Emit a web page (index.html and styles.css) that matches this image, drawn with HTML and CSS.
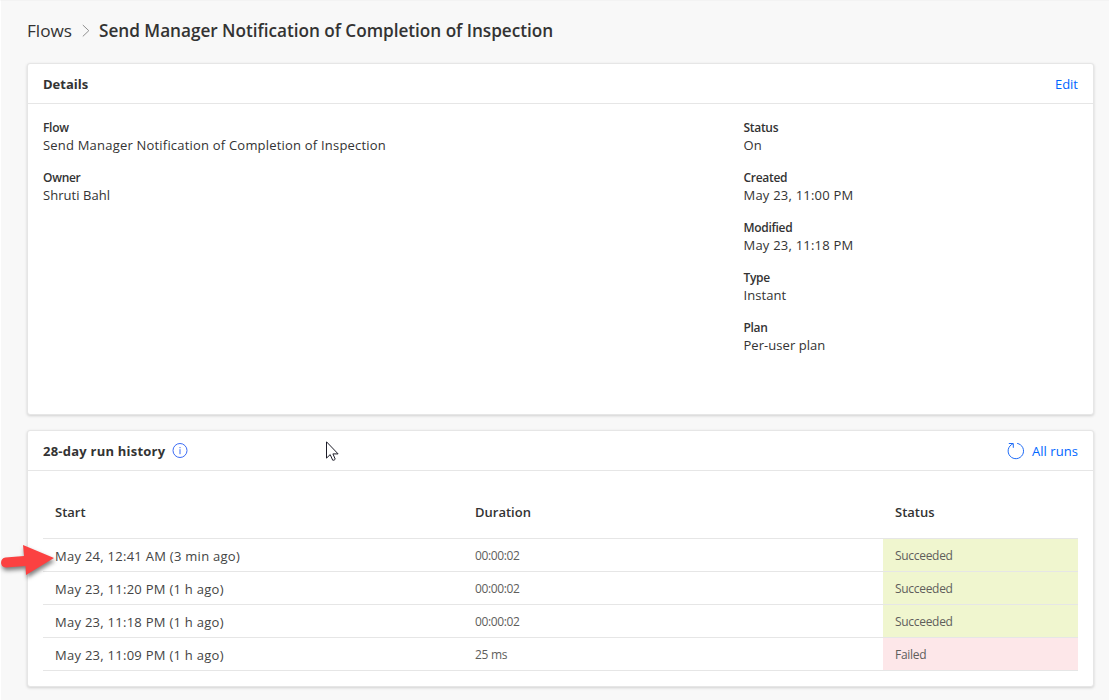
FILE: index.html
```html
<!DOCTYPE html>
<html lang="en">
<head>
<meta charset="utf-8">
<title>Flow details</title>
<link rel="stylesheet" href="styles.css">
</head>
<body>
<main class="page">
  <nav class="crumbs">
    <a class="crumb">Flows</a>
    <svg class="chevron" width="8" height="14" viewBox="0 0 8 14"><path d="M.8 1 6.800 6.700 .8 12.400" fill="none" stroke="#8f8f8f"/></svg>
    <h1 class="title">Send Manager Notification of Completion of Inspection</h1>
  </nav>

  <section class="card details">
    <header class="card-head"><h2>Details</h2><a class="link">Edit</a></header>
    <div class="detail-body">
      <dl class="facts">
        <div><dt>Flow</dt><dd class="name">Send Manager Notification of Completion of Inspection</dd></div>
        <div><dt>Owner</dt><dd>Shruti Bahl</dd></div>
      </dl>
      <dl class="facts">
        <div><dt>Status</dt><dd>On</dd></div>
        <div><dt>Created</dt><dd class="date">May 23, 11:00 PM</dd></div>
        <div><dt>Modified</dt><dd class="date">May 23, 11:18 PM</dd></div>
        <div><dt>Type</dt><dd>Instant</dd></div>
        <div><dt>Plan</dt><dd>Per-user plan</dd></div>
      </dl>
    </div>
  </section>

  <section class="card history">
    <header class="card-head">
      <h2 class="wide">28-day run history</h2>
      <svg class="info" width="16" height="16" viewBox="0 0 16 16"><circle cx="8" cy="7.5" r="7" fill="none" stroke="#3c6cf5"/><path d="M8 4v1.200M8 6.200v5" stroke="#3c6cf5" fill="none"/></svg>
      <a class="link"><svg width="18" height="18" viewBox="0 0 18 18"><path d="M10.200 1.400A7.700 7.700 0 1 1 5.800 1.900M1.800 1.500h4.500v4.300" fill="none" stroke="#1d6bf7"/></svg><span class="runs-label">All runs</span></a>
    </header>
    <div class="runs-grid">
      <div class="row head"><span>Start</span><span>Duration</span><span>Status</span></div>
      <div class="row"><span class="start">May 24, 12:41 AM (3 min ago)</span><span class="time">00:00:02</span><span class="ok">Succeeded</span></div>
      <div class="row"><span class="start">May 23, 11:20 PM (1 h ago)</span><span class="time">00:00:02</span><span class="ok">Succeeded</span></div>
      <div class="row"><span class="start">May 23, 11:18 PM (1 h ago)</span><span class="time">00:00:02</span><span class="ok">Succeeded</span></div>
      <div class="row"><span class="start">May 23, 11:09 PM (1 h ago)</span><span>25 ms</span><span class="bad">Failed</span></div>
    </div>
  </section>
</main>
<svg class="cursor" width="14" height="21" viewBox="0 0 14 21"><path d="M.5.8v16.300l3.700-3.500 2.500 5.600c1.200.2 2.200-.3 2.500-1.200l-2.300-5.100h5.200z" fill="#fff" stroke="#1c1c28"/></svg>
<svg class="arrow" width="60" height="42" viewBox="0 0 60 42"><path d="M5.500 17.500 24 16 23 5 54 18 26 35 25.500 26 6 27.500C-.5 27.500-.5 18 5.500 17.500Z" fill="#fb4141"/></svg>
</body>
</html>
```
FILE: styles.css
```css
* { box-sizing: border-box; }
body { margin: 0; background: #f8f8f8; color: #333; font: 13px/18px "Open Sans", "Noto Sans", sans-serif; }
h1, h2, dl, dd { margin: 0; }
svg { display: block; flex: none; }

.page { height: 700px; padding: 19px 15px 0 26px; border-left: 1px solid #fff; border-top: 1px solid #f3f3f3; }

.crumbs { display: flex; align-items: center; height: 22px; margin-bottom: 21px; gap: 9.500px; }
.crumb { font-size: 17.200px; }
.title { font-size: 17.200px; font-weight: 600; letter-spacing: -0.030px; }

.card { background: #fff; border: 1px solid #e6e6e6; border-radius: 3px; box-shadow: 0 1px 3px rgba(0, 0, 0, .16); }
.card-head { display: flex; align-items: center; height: 40px; padding: 0 15px; border-bottom: 1px solid #e6e6e6; }
h2 { font-size: 13px; font-weight: 700; }
.wide { letter-spacing: .23px; }
.link { display: flex; align-items: center; gap: 7px; margin-left: auto; color: #0066ff; }
.runs-label { letter-spacing: .05px; }
.info { margin-left: 7px; }

.details { height: 352px; margin-bottom: 15px; }
.detail-body { display: grid; grid-template-columns: 700.500px 1fr; padding: 15px; }
.facts div { margin-bottom: 15px; }
dt { font-size: 12px; font-weight: 600; letter-spacing: -.3px; }
dd { line-height: 17px; letter-spacing: .05px; }
.name { letter-spacing: .2px; }
.date { letter-spacing: .22px; }

.history { height: 257px; }
.runs-grid { padding: 15px; }
.row { display: grid; grid-template-columns: 420px 420px 1fr; height: 33px; border-bottom: 1px solid #e6e6e6; font-size: 12px; letter-spacing: -.3px; color: #605e5c; }
.row > span { padding: 8px 12px 0; }
.row > .start { font-size: 13px; color: #444; letter-spacing: .27px; }
.row > .time { letter-spacing: -.38px; }
.row.head { height: 53px; font-size: 13px; font-weight: 600; letter-spacing: 0; color: #333; }
.head > span { padding-top: 17px; }
.ok { background: #f0f6cf; }
.bad { background: #fde7e9; }

.cursor { position: absolute; left: 326px; top: 441px; }
.arrow { position: absolute; left: 0; top: 540px; filter: drop-shadow(1px 3px 2px rgba(0, 0, 0, .5)); }
```
